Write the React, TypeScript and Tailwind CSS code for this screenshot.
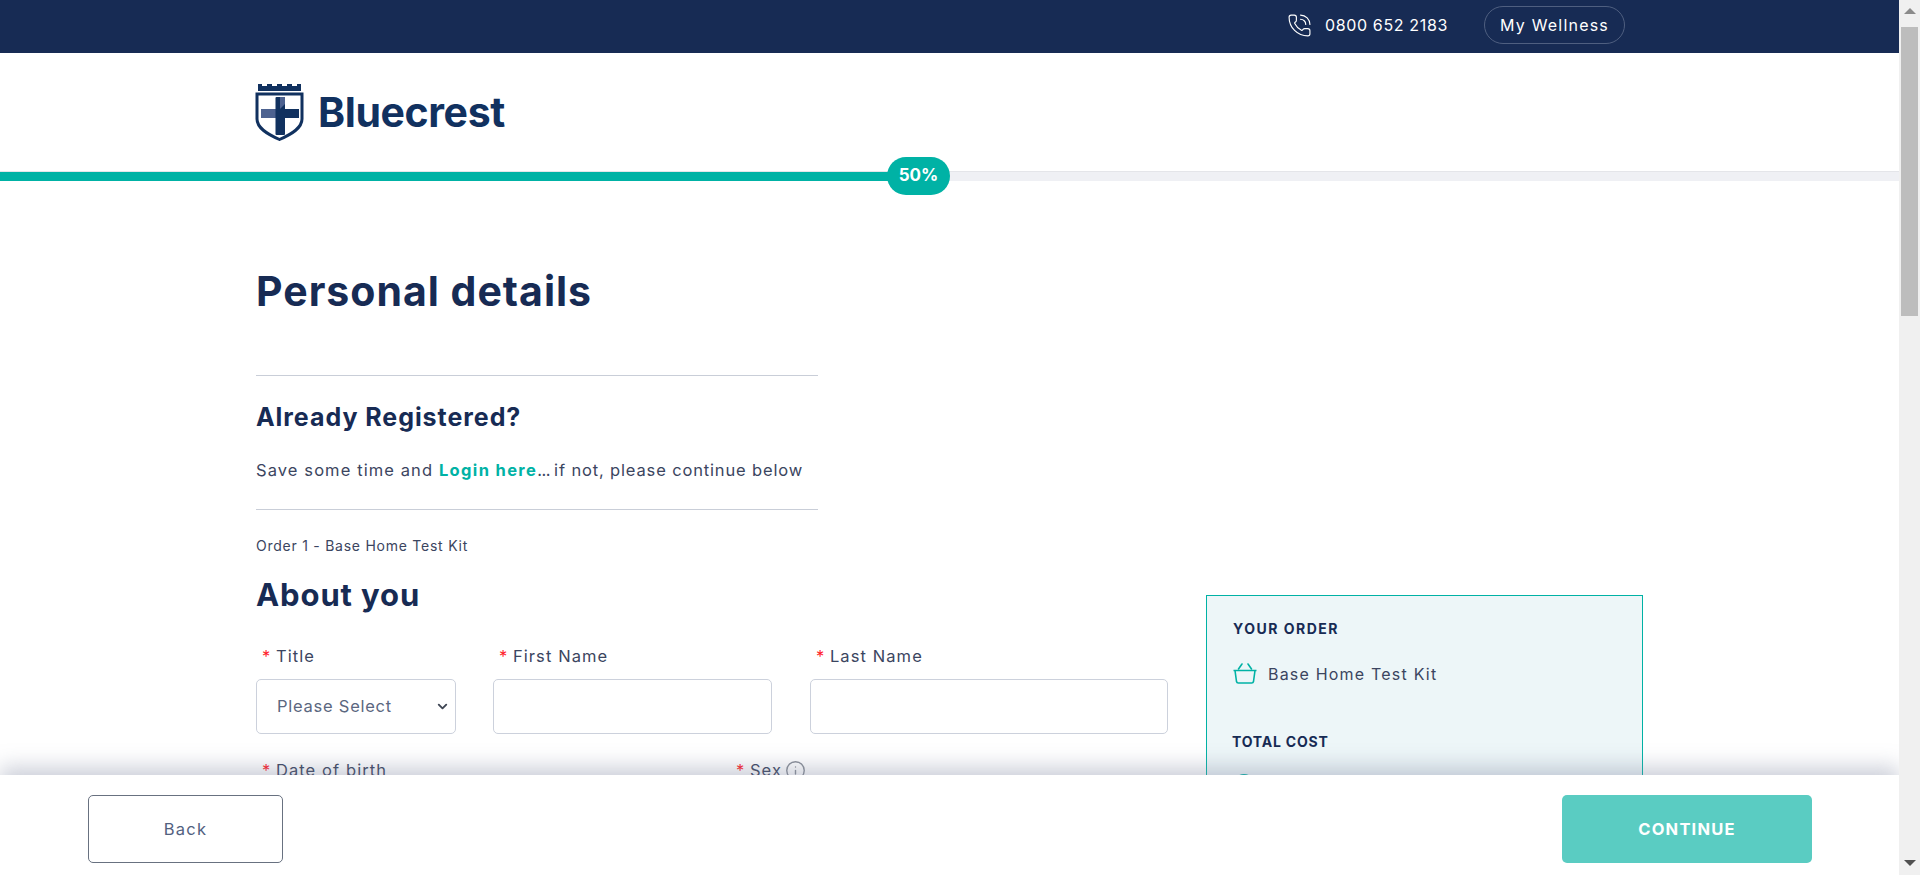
import { ChevronDown, Info, PhoneCall } from "lucide-react";

function Shield() {
  return (
    <svg width="50" height="58" viewBox="0 0 50 58" className="shrink-0" aria-hidden="true">
      <path d="M3 1h4v2h5V1h5v2h5V1h5v2h5V1h5v2h5V1h4v7H3z" fill="#11315f" />
      <path d="M2 11h45v25c0 9-10 15-22.500 20.500C12 51 2 45 2 36z" fill="#fff" stroke="#11315f" strokeWidth="3" />
      <rect x="6" y="26" width="20" height="9" fill="#4d6290" />
      <rect x="20.500" y="14" width="9.500" height="38" rx="1" fill="#11315f" />
      <path d="M21 26h23v9H21z" fill="#11315f" />
      <path d="M25 14h5v7l-5 5z" fill="#4d6290" />
    </svg>
  );
}

function Basket() {
  return (
    <svg width="26" height="24" viewBox="0 0 26 24" fill="none" stroke="#00b2a5" strokeWidth="1.6" aria-hidden="true">
      <path d="M1.500 8.500h23M3 8.500l1.500 11q.3 1.500 1.800 1.500h13.400q1.500 0 1.800-1.500L23 8.500" strokeLinejoin="round" />
      <path d="M6.500 7l3.500-5M19.500 7L16 2" strokeLinecap="round" />
    </svg>
  );
}

function Label({ text, extra }: { text: string; extra?: React.ReactNode }) {
  return (
    <div className="flex h-6 items-center pl-[6px] text-[16.500px] tracking-[1.1px] text-[#3b4560]">
      <span className="mr-[4.500px] text-[#ff1f2d]">*</span>
      <span>{text}</span>
      {extra}
    </div>
  );
}

export default function App() {
  return (
    <div className="flex h-screen overflow-hidden bg-white font-['Inter','Liberation_Sans',sans-serif] text-[#172b54]">
      <div className="relative min-w-0 flex-1 overflow-hidden">
        <div className="flex h-[53px] items-center justify-end bg-[#172b54] pb-[3px] pr-[274px] text-white">
          <PhoneCall size={25} strokeWidth={1.1} className="mr-[13px]" />
          <span className="text-[16px] tracking-[0.65px]">0800 652 2183</span>
          <span className="ml-[36px] flex h-[38px] w-[141px] items-center justify-center rounded-full border border-[#4f5f80] text-[16px] tracking-[1.2px]">
            My Wellness
          </span>
        </div>

        <div className="flex h-[118px] items-center pb-[1px] pl-[255px]">
          <Shield />
          <span className="ml-[13px] mt-[3px] text-[41px] font-bold tracking-[-0.4px] text-[#11315f]">Bluecrest</span>
        </div>

        <div className="relative h-[10px] border-t border-[#e4e5e9] bg-[#eff0f4]">
          <div className="h-[9px] w-[900px] bg-[#00b2a5]" />
          <div className="absolute left-[887px] top-[-15px] flex h-[38px] w-[63px] items-center justify-center rounded-full bg-[#00b2a5] text-[17px] font-bold text-white">
            50%
          </div>
        </div>

        <div className="px-[256px]">
          <h1 className="mt-[85px] text-[41px] font-bold leading-[50px] tracking-[1px]">Personal details</h1>

          <div className="mt-[59px] w-[562px] border-y border-[#c9ced8]">
            <h2 className="mt-[26px] text-[25px] font-bold leading-[30px] tracking-[0.95px]">Already Registered?</h2>
            <p className="mb-[27px] mt-[26px] text-[16.500px] leading-[24px] tracking-[0.85px] text-[#3b4560]">
              <span className="tracking-[1.1px]">Save some time and </span>
              <a className="font-bold tracking-[1.35px] text-[#00b2a5]">Login here</a>
              <span className="tracking-[-0.5px]">... </span>
              if not, please continue below
            </p>
          </div>

          <p className="mt-[26px] text-[14px] leading-[20px] tracking-[0.75px] text-[#3b4560]">
            Order 1 - Base Home Test Kit
          </p>

          <div className="flex items-start justify-between">
            <div className="w-[912px]">
              <h2 className="mt-[20px] text-[31px] font-bold leading-[38px] tracking-[0.9px]">About you</h2>
              <div className="mt-[30px] flex">
                <div className="w-[200px]">
                  <Label text="Title" />
                  <div className="relative mt-[11px] flex h-[55px] items-center rounded-[5px] border border-[#ccd1dc] pl-[20px] text-[16.500px] tracking-[0.75px] text-[#5b6780]">
                    Please Select
                    <ChevronDown size={15} strokeWidth={3} className="absolute right-[5px] top-[19px] text-[#3f4654]" />
                  </div>
                </div>
                <div className="ml-[37px] w-[279px]">
                  <Label text="First Name" />
                  <div className="mt-[11px] h-[55px] rounded-[5px] border border-[#ccd1dc]" />
                </div>
                <div className="ml-[38px] w-[358px]">
                  <Label text="Last Name" />
                  <div className="mt-[11px] h-[55px] rounded-[5px] border border-[#ccd1dc]" />
                </div>
              </div>
              <div className="mt-[24px] flex">
                <div className="w-[474px]">
                  <Label text="Date of birth" />
                </div>
                <Label
                  text="Sex"
                  extra={<Info size={21} strokeWidth={1.6} className="ml-[3px] text-[#8a8f98]" />}
                />
              </div>
            </div>

            <aside className="mt-[39px] h-[400px] w-[437px] border border-[#00b2a5] bg-[#edf6f8] px-[25px] pt-[23px]">
              <h3 className="pl-[1px] text-[14px] font-bold leading-[20px] tracking-[1.5px]">YOUR ORDER</h3>
              <div className="mt-[23px] flex items-center">
                <Basket />
                <span className="ml-[10px] text-[16px] tracking-[1.2px] text-[#3b4560]">Base Home Test Kit</span>
              </div>
              <h3 className="mt-[46px] text-[14px] font-bold leading-[20px] tracking-[0.8px]">TOTAL COST</h3>
              <div className="mt-[22px] h-6 w-6 rounded-full border-2 border-[#00b2a5]" />
            </aside>
          </div>
        </div>

        <footer className="absolute inset-x-0 bottom-0 flex h-[100px] items-center justify-between bg-white pl-[88px] pr-[87px] pt-[8px] shadow-[0_-8px_20px_rgba(120,130,155,0.38)]">
          <button className="flex h-[68px] w-[195px] items-center justify-center rounded-[5px] border border-[#687180] text-[16.500px] tracking-[1.3px] text-[#52617f]">
            Back
          </button>
          <button className="flex h-[68px] w-[250px] items-center justify-center rounded-[5px] bg-[#5accc2] text-[16.500px] font-bold tracking-[1.2px] text-white">
            CONTINUE
          </button>
        </footer>
      </div>

      <div className="flex w-[21px] shrink-0 flex-col items-center bg-[#f0f0f0]">
        <div className="mt-[8px] h-0 w-0 border-x-[6px] border-b-[6px] border-x-transparent border-b-[#8b8b8b]" />
        <div className="mt-[13px] h-[289px] w-[17px] bg-[#bdbdbd]" />
        <div className="mb-[9px] mt-auto h-0 w-0 border-x-[6px] border-t-[6px] border-x-transparent border-t-[#505050]" />
      </div>
    </div>
  );
}
